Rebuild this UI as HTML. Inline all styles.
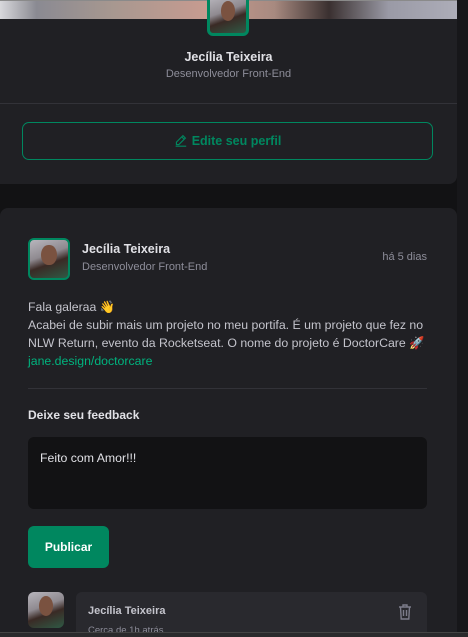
<!DOCTYPE html>
<html style="overflow:hidden;width:468px;height:637px"><head><meta charset="utf-8"><style>
*{margin:0;padding:0;box-sizing:border-box}
body{width:468px;height:637px;background:#121214;font-family:"Liberation Sans",sans-serif;position:relative;overflow:hidden;color:#e1e1e6}
.abs{position:absolute}
.card{position:absolute;left:0;width:457px;background:#202024;border-radius:0 0 8px 0;overflow:hidden}
.strip{position:absolute;left:457px;top:0;width:11px;height:637px;background:#17171a}
.av{position:absolute;border:2px solid #00875f;border-radius:6px;background:linear-gradient(160deg,#b8b6bd 0%,#8f8a90 40%,#3a2a25 60%,#2f5a45 100%);overflow:hidden}
.av::after{content:"";position:absolute;left:30%;top:12%;width:40%;height:55%;border-radius:50%;background:#7a5240}
</style></head><body>
<div class="strip"></div>
<div class="card" style="top:0;height:184px">
  <div class="abs" style="left:0;top:0;width:457px;height:19px;background:linear-gradient(90deg,#d8d8dc 0%,#8a8a92 8%,#a89890 25%,#c79b90 45%,#a88a80 60%,#3a3030 72%,#9a9aa6 85%,#adadb8 100%)"></div>
  <div class="abs" style="left:0;top:0;width:468px;height:1px;background:#8a8a8a"></div>
  <div class="av" style="left:207px;top:-6px;width:42px;height:42px;border-width:3px"></div>
  <div class="abs" style="left:0;width:457px;top:50px;text-align:center;font-weight:bold;font-size:12.5px;color:#e1e1e6">Jecília Teixeira</div>
  <div class="abs" style="left:0;width:457px;top:68px;text-align:center;font-size:11px;color:#8d8d99">Desenvolvedor Front-End</div>
  <div class="abs" style="left:0;top:103px;width:457px;height:1px;background:#323238"></div>
  <div class="abs" style="left:22px;top:122px;width:411px;height:38px;border:1px solid #00875f;border-radius:7px;color:#00875f;font-weight:bold;font-size:12.5px;text-align:center;line-height:36px">
    <svg width="13" height="13" viewBox="0 0 16 16" style="vertical-align:-2px;margin-right:5px" fill="none" stroke="#00875f" stroke-width="1.4"><path d="M11 2l3 3-8 8H3v-3z M9.5 3.5l3 3 M2 15h13"/></svg>Edite seu perfil</div>
</div>
<div class="card" style="top:208px;height:424px;border-radius:8px 8px 0 0">
  <div class="av" style="left:28px;top:30px;width:42px;height:42px;border-width:2px"></div>
  <div class="abs" style="left:82px;top:34px;font-weight:bold;font-size:12.5px">Jecília Teixeira</div>
  <div class="abs" style="left:82px;top:53px;font-size:11px;color:#8d8d99">Desenvolvedor Front-End</div>
  <div class="abs" style="right:30px;top:43px;font-size:11px;color:#8d8d99">há 5 dias</div>
  <div class="abs" style="left:28px;top:90px;width:410px;font-size:12.3px;line-height:18px;color:#c4c4cc">Fala galeraa 👋<br>Acabei de subir mais um projeto no meu portifa. É um projeto que fez no NLW Return, evento da Rocketseat. O nome do projeto é DoctorCare 🚀<br><span style="color:#00b37e">jane.design/doctorcare</span></div>
  <div class="abs" style="left:28px;top:180px;width:399px;height:1px;background:#323238"></div>
  <div class="abs" style="left:28px;top:200px;font-weight:bold;font-size:12px">Deixe seu feedback</div>
  <div class="abs" style="left:28px;top:229px;width:399px;height:72px;background:#121214;border-radius:6px;padding:14px 12px;font-size:12.3px;color:#e1e1e6">Feito com Amor!!!</div>
  <div class="abs" style="left:28px;top:318px;width:81px;height:42px;background:#00875f;border-radius:6px;color:#fff;font-weight:bold;font-size:12px;text-align:center;line-height:42px">Publicar</div>
  <div class="av" style="left:28px;top:384px;width:36px;height:36px;border:none;border-radius:6px"></div>
  <div class="abs" style="left:76px;top:384px;width:351px;height:60px;background:#29292e;border-radius:6px">
    <div class="abs" style="left:12px;top:13px;font-weight:bold;font-size:11px;color:#c4c4cc">Jecília Teixeira</div>
    <div class="abs" style="left:12px;top:33px;font-size:9.5px;color:#8d8d99">Cerca de 1h atrás</div>
    <svg class="abs" style="left:322px;top:12px" width="14" height="16" viewBox="0 0 14 16" fill="none" stroke="#7c7c8a" stroke-width="1.4"><path d="M1 3h12M5 3V1h4v2M2.5 3l.7 12h7.6l.7-12M5.5 6v6M8.5 6v6"/></svg>
  </div>
</div>
<div class="abs" style="left:0;top:632px;width:468px;height:5px;background:#2a2a2c;border-top:1px solid #444"></div>
</body></html>
